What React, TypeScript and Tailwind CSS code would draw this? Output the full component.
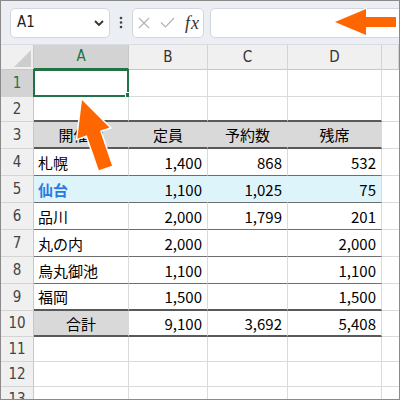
import React from "react";

const HEAD = "font-['DejaVu_Sans_Condensed','Liberation_Sans',sans-serif]";
const CELL = "font-['Noto_Sans_CJK_JP','Noto_Sans',sans-serif]";

type C = { t?: string; a?: "l" | "r" | "c"; fill?: "gray" | "blue"; bold?: boolean };
type R = { n: string; h: string; b: "grid" | "thick" | "thin"; c: C[]; sel?: boolean };

const E: C = {};
const rows: R[] = [
  { n: "1", h: "h-[27px]", b: "grid", c: [E, E, E, E], sel: true },
  { n: "2", h: "h-[25px]", b: "thick", c: [E, E, E, E] },
  {
    n: "3",
    h: "h-[27px]",
    b: "thick",
    c: [
      { t: "開催地", a: "c", fill: "gray" },
      { t: "定員", a: "c", fill: "gray" },
      { t: "予約数", a: "c", fill: "gray" },
      { t: "残席", a: "c", fill: "gray" },
    ],
  },
  { n: "4", h: "h-[27px]", b: "thin", c: [{ t: "札幌" }, { t: "1,400", a: "r" }, { t: "868", a: "r" }, { t: "532", a: "r" }] },
  {
    n: "5",
    h: "h-[27px]",
    b: "thin",
    c: [
      { t: "仙台", fill: "blue", bold: true },
      { t: "1,100", a: "r", fill: "blue" },
      { t: "1,025", a: "r", fill: "blue" },
      { t: "75", a: "r", fill: "blue" },
    ],
  },
  { n: "6", h: "h-[27px]", b: "thin", c: [{ t: "品川" }, { t: "2,000", a: "r" }, { t: "1,799", a: "r" }, { t: "201", a: "r" }] },
  { n: "7", h: "h-[27px]", b: "thin", c: [{ t: "丸の内" }, { t: "2,000", a: "r" }, E, { t: "2,000", a: "r" }] },
  { n: "8", h: "h-[27px]", b: "thin", c: [{ t: "烏丸御池" }, { t: "1,100", a: "r" }, E, { t: "1,100", a: "r" }] },
  { n: "9", h: "h-[27px]", b: "thick", c: [{ t: "福岡" }, { t: "1,500", a: "r" }, E, { t: "1,500", a: "r" }] },
  {
    n: "10",
    h: "h-[26px]",
    b: "thick",
    c: [{ t: "合計", a: "c", fill: "gray" }, { t: "9,100", a: "r" }, { t: "3,692", a: "r" }, { t: "5,408", a: "r" }],
  },
  { n: "11", h: "h-[25px]", b: "grid", c: [E, E, E, E] },
  { n: "12", h: "h-[25px]", b: "grid", c: [E, E, E, E] },
  { n: "13", h: "h-[25px]", b: "grid", c: [E, E, E, E] },
];

const bottomCls: Record<R["b"], string> = {
  grid: "border-b border-b-[#dadada]",
  thick: "border-b-2 border-b-[#595959]",
  thin: "border-b border-b-[#6e6e6e]",
};

function Cell({ c, i, r }: { c: C; i: number; r: R }) {
  const align = c.a === "r" ? "justify-end pr-[5px]" : c.a === "c" ? "justify-center" : "justify-start pl-[4px]";
  const bg = c.fill === "gray" ? "bg-[#d9d9d9]" : c.fill === "blue" ? "bg-[#def4fb]" : "bg-white";
  const right =
    c.fill && i < 3 ? (c.fill === "gray" ? "border-r-[#d9d9d9]" : "border-r-[#def4fb]") : "border-r-[#dadada]";
  const txt = c.bold ? "font-bold text-[#2a78e4]" : "text-black";
  return (
    <div className={`relative flex items-center border-r ${right} ${bottomCls[r.b]} ${bg} ${align} ${r.h}`}>
      {c.t && <span className={`${CELL} text-[15px] leading-none whitespace-nowrap ${txt}`}>{c.t}</span>}
      {r.sel && i === 0 && (
        <>
          <div className="absolute -left-[1px] -top-[1px] -right-[1px] -bottom-[1px] border-2 border-[#217346]" />
          <div className="absolute right-[-4px] bottom-[-3px] w-[7px] h-[7px] bg-[#217346] border border-white" />
        </>
      )}
    </div>
  );
}

export default function App() {
  return (
    <div className="relative w-[400px] h-[400px] overflow-hidden border border-[#8a8a8a] bg-white">
      {/* toolbar */}
      <div className="h-[44px] flex items-center bg-[#ebeef2] border-b border-b-[#d9dde2] pl-[9px] overflow-hidden">
        <div className="w-[100px] h-[30px] shrink-0 bg-white border border-[#d3d6da] rounded-[5px] flex items-center justify-between pl-[6px] pr-[5px]">
          <span className={`${HEAD} text-[15px] text-[#222] leading-none`}>A1</span>
          <svg width="10" height="6" viewBox="0 0 10 6">
            <path d="M1 1 L5 5 L9 1" fill="none" stroke="#333" strokeWidth="1.8" />
          </svg>
        </div>
        <div className="w-[22px] shrink-0 flex justify-center">
          <svg width="4" height="13" viewBox="0 0 4 13">
            <circle cx="2" cy="2" r="1.3" fill="#444" />
            <circle cx="2" cy="6.5" r="1.3" fill="#444" />
            <circle cx="2" cy="11" r="1.3" fill="#444" />
          </svg>
        </div>
        <div className="w-[72px] h-[30px] shrink-0 bg-white border border-[#d3d6da] rounded-[5px] flex items-center pl-[5px] gap-[10px]">
          <svg width="12" height="12" viewBox="0 0 12 12">
            <path d="M1 1 L11 11 M11 1 L1 11" stroke="#b3b3b3" strokeWidth="1.2" fill="none" />
          </svg>
          <svg width="15" height="11" viewBox="0 0 15 11">
            <path d="M1 5.5 L5.5 10 L14 1" stroke="#b3b3b3" strokeWidth="1.2" fill="none" />
          </svg>
          <span className="font-['Liberation_Serif',serif] italic text-[18px] leading-none text-[#333] tracking-[1px]">fx</span>
        </div>
        <div className="ml-[6px] w-[220px] h-[30px] shrink-0 bg-white border border-[#d3d6da] rounded-[5px]" />
      </div>

      {/* sheet */}
      <div className="grid grid-cols-[33px_95px_79px_80px_94px_1fr]">
        {/* column headers */}
        <div className="h-[25px] bg-[#f0f0f0] border-r border-r-[#c8c8c8] border-b border-b-[#c8c8c8] relative">
          <svg className="absolute left-0 top-0" width="32" height="24" viewBox="0 0 32 24">
            <polygon points="13,22 30,22 30,5" fill="#cdcdcd" />
          </svg>
        </div>
        <div className={`h-[25px] bg-[#d3d3d3] border-r border-r-[#c8c8c8] border-b-2 border-b-[#217346] flex items-center justify-center ${HEAD} text-[15px] text-[#217346]`}>
          A
        </div>
        {["B", "C", "D", ""].map((l, i) => (
          <div
            key={i}
            className={`h-[25px] bg-[#f0f0f0] border-r border-r-[#d4d4d4] border-b border-b-[#c8c8c8] flex items-center justify-center ${HEAD} text-[15px] text-[#333]`}
          >
            {l}
          </div>
        ))}

        {rows.map((r) => (
          <React.Fragment key={r.n}>
            <div
              className={`${r.h} ${r.sel ? "bg-[#d3d3d3] text-[#217346]" : "bg-[#f0f0f0] text-[#444]"} border-r border-r-[#c8c8c8] border-b border-b-[#d4d4d4] flex items-center justify-center ${HEAD} text-[15px]`}
            >
              {r.n}
            </div>
            {r.c.map((c, i) => (
              <Cell key={i} c={c} i={i} r={r} />
            ))}
            <div className={`${r.h} bg-white border-b border-b-[#dadada]`} />
          </React.Fragment>
        ))}
      </div>

      {/* arrows */}
      <svg className="absolute left-[-1px] top-[-1px] pointer-events-none" width="400" height="400" viewBox="0 0 400 400">
        <polygon
          points="335,22 366,9 366,17 396,17 396,27 366,27 366,35"
          fill="#ff6600"
          stroke="#ffffff"
          strokeWidth="2"
          paintOrder="stroke"
        />
        <g transform="translate(82,100) rotate(-19)">
          <polygon
            points="0,0 17,35 7,35 7,72 -7,72 -7,35 -17,35"
            fill="#ff6600"
            stroke="#ffffff"
            strokeWidth="3"
            paintOrder="stroke"
          />
        </g>
      </svg>
    </div>
  );
}
